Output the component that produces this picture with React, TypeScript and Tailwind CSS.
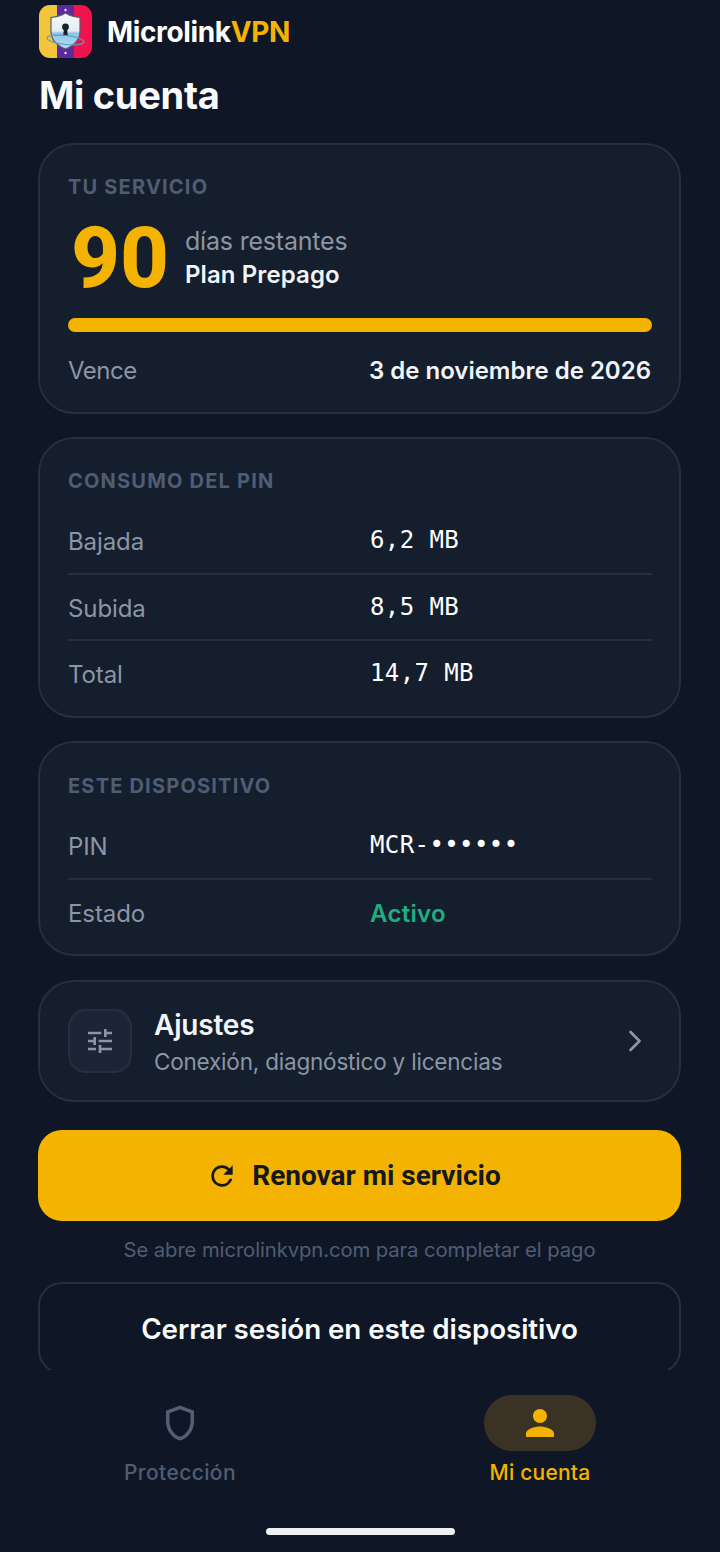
import { ChevronRight } from "lucide-react";
import { MdOutlineShield, MdPerson, MdRefresh, MdTune } from "react-icons/md";

const UI_FONT = "font-['Inter','Noto_Sans',sans-serif]";

function Logo() {
  return (
    <svg width="53" height="53" viewBox="0 0 53 53" className="ml-[1px] shrink-0">
      <defs>
        <clipPath id="logo-clip">
          <rect x="0" y="0" width="53" height="53" rx="11" />
        </clipPath>
        <linearGradient id="logo-shield" x1="0" y1="0" x2="0" y2="1">
          <stop offset="0" stopColor="#f4f6f8" />
          <stop offset="0.5" stopColor="#e6edf2" />
          <stop offset="0.56" stopColor="#8ec5e6" />
          <stop offset="1" stopColor="#b9dcf0" />
        </linearGradient>
      </defs>
      <g clipPath="url(#logo-clip)">
        <rect x="0" y="0" width="18" height="53" fill="#f2c53d" />
        <rect x="18" y="0" width="18" height="53" fill="#5b2a9d" />
        <rect x="35" y="0" width="18" height="53" fill="#f0134d" />
      </g>
      <path d="M26.5 8 C31 11 36 12 41 12.5 V26 C41 35 34 41 26.5 44 C19 41 12 35 12 26 V12.5 C17 12 22 11 26.5 8 Z" fill="url(#logo-shield)" stroke="#56606e" strokeWidth="1.2" />
      <circle cx="26.5" cy="22" r="3.4" fill="#16202c" />
      <path d="M25 23 h3 l0.8 8 h-4.6 Z" fill="#16202c" />
      <ellipse cx="26.5" cy="35" rx="18.5" ry="4.5" transform="rotate(6 26.5 35)" fill="none" stroke="#5f9cc9" strokeWidth="1.2" />
      <circle cx="26.5" cy="5" r="1.2" fill="#e8e4f5" />
      <circle cx="26.5" cy="48" r="1.2" fill="#e8e4f5" />
    </svg>
  );
}

function SectionLabel({ children }: { children: string }) {
  return <div className="text-[20px] leading-[24px] font-bold tracking-[1.2px] text-[#4f5d73]">{children}</div>;
}

function Row({ label, children, divider = true }: { label: string; children: React.ReactNode; divider?: boolean }) {
  return (
    <div className={`flex h-[66.5px] items-center ${divider ? "border-b-2 border-[#252f40] pt-[4px]" : "pt-[2px]"}`}>
      <span className="w-[302px] text-[24px] font-normal tracking-[-0.1px] text-[#8b95a5]">{label}</span>
      {children}
    </div>
  );
}

function MonoValue({ children }: { children: string }) {
  return (
    <span className="-mt-1 font-['DejaVu_Sans_Mono',monospace] text-[24px] font-medium tracking-[0.4px] text-white">
      {children}
    </span>
  );
}

function Card({ children, className = "" }: { children: React.ReactNode; className?: string }) {
  return <section className={`rounded-[36px] border-2 border-[#252f40] bg-[#151e2d] ${className}`}>{children}</section>;
}

export default function App() {
  return (
    <div className={`flex h-[1552px] w-[720px] flex-col overflow-hidden bg-[#0f1726] ${UI_FONT}`}>
      <main className="h-[1370px] shrink-0 overflow-hidden pt-[5px] pr-[39px] pl-[38px]">
        <header className="flex h-[53px] items-center gap-[15px]">
          <Logo />
          <div className="text-[28px] font-bold tracking-[-0.35px] text-white">
            Microlink<span className="text-[#f5b301]">VPN</span>
          </div>
        </header>
        <h1 className="mt-[12px] ml-[1px] text-[38px] leading-[50px] font-bold tracking-[-0.3px] text-[#f8fafc]">Mi cuenta</h1>

        <Card className="mt-[23px] h-[271px] pt-[30px] pr-[27px] pl-[28px]">
          <SectionLabel>TU SERVICIO</SectionLabel>
          <div className="mt-[17px] flex h-[84px] items-center">
            <span className="w-[117px] pl-[3px] font-['Roboto',sans-serif] text-[85px] leading-none font-extrabold text-[#f5b301]">90</span>
            <div>
              <div className="text-[25px] leading-[33px] tracking-[-0.2px] text-[#8b95a5]">días restantes</div>
              <div className="text-[24px] leading-[33px] font-semibold tracking-[0.1px] text-[#f1f4f8]">Plan Prepago</div>
            </div>
          </div>
          <div className="mt-[18px] h-[14px] rounded-full bg-[#f5b301]" />
          <div className="mt-[21px] flex items-center justify-between">
            <span className="text-[24px] tracking-[-0.5px] text-[#8b95a5]">Vence</span>
            <span className="mr-[1px] text-[24px] font-semibold text-[#f1f4f8]">3 de noviembre de 2026</span>
          </div>
        </Card>

        <Card className="mt-[23px] h-[281px] pt-[30px] pr-[27px] pl-[28px]">
          <SectionLabel>CONSUMO DEL PIN</SectionLabel>
          <div className="mt-[15px]">
            <Row label="Bajada"><MonoValue>6,2 MB</MonoValue></Row>
            <Row label="Subida"><MonoValue>8,5 MB</MonoValue></Row>
            <Row label="Total" divider={false}><MonoValue>14,7 MB</MonoValue></Row>
          </div>
        </Card>

        <Card className="mt-[23px] h-[215px] pt-[31px] pr-[27px] pl-[28px]">
          <SectionLabel>ESTE DISPOSITIVO</SectionLabel>
          <div className="mt-[15px]">
            <Row label="PIN"><MonoValue>MCR-••••••</MonoValue></Row>
            <Row label="Estado" divider={false}>
              <span className="text-[24px] font-semibold tracking-[0.3px] text-[#1fae84]">Activo</span>
            </Row>
          </div>
        </Card>

        <Card className="mt-[24px] flex h-[122px] items-center pr-[26px] pl-[28px]">
          <div className="flex h-[64px] w-[64px] items-center justify-center rounded-[18px] border-2 border-[#252f40] bg-[#1b2536]">
            <MdTune size={32} className="text-[#8b95a5]" />
          </div>
          <div className="ml-[22px] flex-1 pt-[2px]">
            <div className="text-[28px] leading-[38px] font-semibold tracking-[-0.2px] text-[#f1f4f8]">Ajustes</div>
            <div className="mt-[1px] text-[22.5px] leading-[34px] tracking-[-0.2px] text-[#8b95a5]">Conexión, diagnóstico y licencias</div>
          </div>
          <ChevronRight size={36} className="text-[#8b95a5]" strokeWidth={1.8} />
        </Card>

        <button className="mt-[28px] flex h-[91px] w-full items-center justify-center gap-[14px] rounded-[24px] bg-[#f5b301] pr-[12px] font-['Roboto',sans-serif] text-[28px] font-bold text-[#14181f]">
          <MdRefresh size={32} />
          Renovar mi servicio
        </button>
        <p className="mt-[14px] text-center text-[20.3px] leading-[30px] tracking-[-0.1px] text-[#4f5d73]">
          Se abre microlinkvpn.com para completar el pago
        </p>
        <button className="mt-[17px] h-[92px] w-full rounded-[24px] border-2 border-[#252f40] pt-[4px] text-[27.8px] font-semibold tracking-[-0.1px] text-[#f8fafc]">
          Cerrar sesión en este dispositivo
        </button>
      </main>

      <nav className="relative flex flex-1 pt-[25px]">
        <div className="flex flex-1 flex-col items-center">
          <div className="flex h-[56px] w-[112px] items-center justify-center">
            <MdOutlineShield size={42} className="text-[#525f74]" />
          </div>
          <span className="mt-[8px] text-[21px] leading-[28px] font-medium tracking-[0.4px] text-[#4f5d73]">Protección</span>
        </div>
        <div className="flex flex-1 flex-col items-center">
          <div className="flex h-[56px] w-[112px] items-center justify-center rounded-full bg-[#3a3325]">
            <MdPerson size={42} className="text-[#f5b301]" />
          </div>
          <span className="mt-[8px] text-[21px] leading-[28px] font-medium tracking-[0.2px] text-[#f5b301]">Mi cuenta</span>
        </div>
        <div className="absolute bottom-[17px] left-[266px] h-[7px] w-[189px] rounded-full bg-[#eef1f4]" />
      </nav>
    </div>
  );
}
